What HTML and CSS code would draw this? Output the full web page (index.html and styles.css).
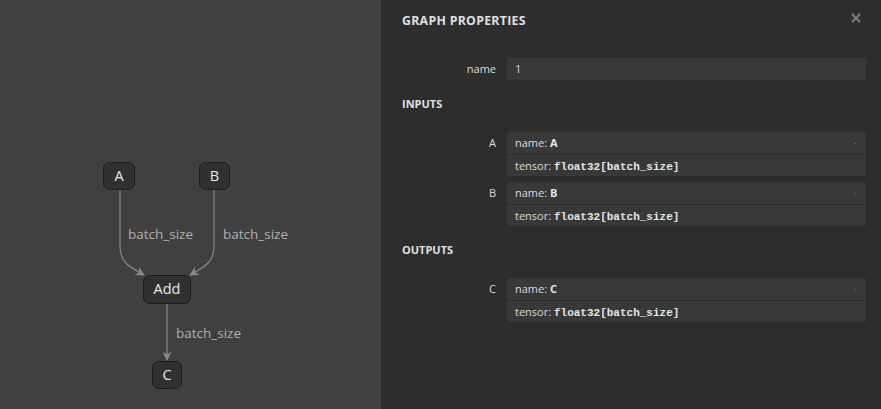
FILE: index.html
```html
<!DOCTYPE html>
<html>
<head>
<meta charset="utf-8">
<link rel="stylesheet" href="styles.css">
</head>
<body>
<div class="graph">
  <svg class="canvas" width="381" height="409" viewBox="0 0 381 409">
    <defs>
      <marker id="arrow" viewBox="0 0 10 10" refX="9" refY="5" markerWidth="9" markerHeight="9" markerUnits="userSpaceOnUse" orient="auto">
        <path d="M0,0 L10,5 L0,10 L2.5,5 Z" fill="#888"/>
      </marker>
    </defs>
    <g class="edges">
      <path d="M120,190 L120,246 C120,262 128,266 144,275" marker-end="url(#arrow)"/>
      <path d="M214,190 L214,246 C214,262 206,266 190,275" marker-end="url(#arrow)"/>
      <path d="M167,304 L167,360" marker-end="url(#arrow)"/>
    </g>
    <g class="edge-labels">
      <text x="128" y="239">batch_size</text>
      <text x="223" y="239">batch_size</text>
      <text x="176" y="338">batch_size</text>
    </g>
    <g class="nodes">
      <rect x="103.5" y="162.5" width="31" height="27" rx="6"/>
      <text x="119" y="181">A</text>
      <rect x="199.5" y="162.5" width="30" height="27" rx="6"/>
      <text x="214.5" y="181">B</text>
      <rect x="143.5" y="275.5" width="47" height="28" rx="6"/>
      <text x="167" y="294">Add</text>
      <rect x="152.5" y="361.5" width="29" height="27" rx="6"/>
      <text x="167" y="380">C</text>
    </g>
  </svg>
</div>
<aside class="sidebar">
  <div class="header">
    <span class="title">GRAPH PROPERTIES</span>
    <svg class="close" width="10" height="10" viewBox="0 0 10 10"><path d="M1,1 L9,9 M9,1 L1,9"/></svg>
  </div>
  <div class="row first">
    <div class="label">name</div>
    <div class="value simple">1</div>
  </div>
  <div class="section">INPUTS</div>
  <div class="row item">
    <div class="label">A</div>
    <div class="value">
      <div class="line head"><span>name: <b>A</b></span><span class="toggle">-</span></div>
      <div class="line">tensor: <code>float32[batch_size]</code></div>
    </div>
  </div>
  <div class="row item next">
    <div class="label">B</div>
    <div class="value">
      <div class="line head"><span>name: <b>B</b></span><span class="toggle">-</span></div>
      <div class="line">tensor: <code>float32[batch_size]</code></div>
    </div>
  </div>
  <div class="section">OUTPUTS</div>
  <div class="row item">
    <div class="label">C</div>
    <div class="value">
      <div class="line head"><span>name: <b>C</b></span><span class="toggle">-</span></div>
      <div class="line">tensor: <code>float32[batch_size]</code></div>
    </div>
  </div>
</aside>
</body>
</html>
```
FILE: styles.css
```css
html, body {
  margin: 0;
  padding: 0;
  width: 881px;
  height: 409px;
  overflow: hidden;
}
body {
  display: flex;
  font-family: "Open Sans", "Noto Sans", sans-serif;
  color: #dfdfdf;
}
.graph {
  flex: 0 0 381px;
  background: #404040;
}
.canvas {
  display: block;
}
.edges path {
  fill: none;
  stroke: #888;
  stroke-width: 1.2;
}
.edge-labels text {
  fill: #b0b0b0;
  font-size: 13.5px;
  font-family: "Open Sans", sans-serif;
}
.nodes rect {
  fill: #303030;
  stroke: #1c1c1c;
  stroke-width: 1;
}
.nodes text {
  fill: #e8e8e8;
  font-size: 14.5px;
  text-anchor: middle;
  font-family: "Open Sans", sans-serif;
}
.sidebar {
  flex: 1;
  background: #2d2d2d;
  padding: 0 15px 0 21px;
  font-size: 11px;
}
.header {
  display: flex;
  justify-content: space-between;
  align-items: center;
  height: 20px;
  margin-top: 10px;
}
.title {
  font-weight: 700;
  font-size: 12.3px;
  letter-spacing: 0.3px;
  color: #e0e0e0;
}
.close {
  margin-right: 5px;
  margin-top: -4px;
}
.close path {
  stroke: #76808c;
  stroke-width: 2;
}
.row {
  display: grid;
  grid-template-columns: 94px 1fr;
  column-gap: 11px;
}
.row.first {
  margin-top: 28px;
}
.row.item {
  margin-top: 18px;
}
.row.item.next {
  margin-top: 6px;
}
.label {
  text-align: right;
  line-height: 22px;
  color: #dcdcdc;
  font-size: 11px;
}
.value {
  background: #383838;
  border-radius: 2px;
  color: #dcdcdc;
}
.value.simple {
  line-height: 22px;
  padding-left: 8px;
}
.line {
  line-height: 22px;
  height: 22px;
  padding: 0 8px;
}
.line.head {
  display: flex;
  justify-content: space-between;
  align-items: center;
}
.line + .line {
  border-top: 1px solid #2c2c2c;
  height: 21px;
  line-height: 21px;
}
.line b {
  font-weight: 700;
  color: #e6e6e6;
}
code {
  font-family: "Liberation Mono", monospace;
  font-weight: 700;
  font-size: 11px;
  color: #e6e6e6;
}
.toggle {
  color: #6a6a6a;
  font-size: 9px;
  margin-right: 1px;
}
.section {
  margin-top: 14px;
  line-height: 20px;
  font-weight: 700;
  font-size: 11px;
  color: #e0e0e0;
}
```
